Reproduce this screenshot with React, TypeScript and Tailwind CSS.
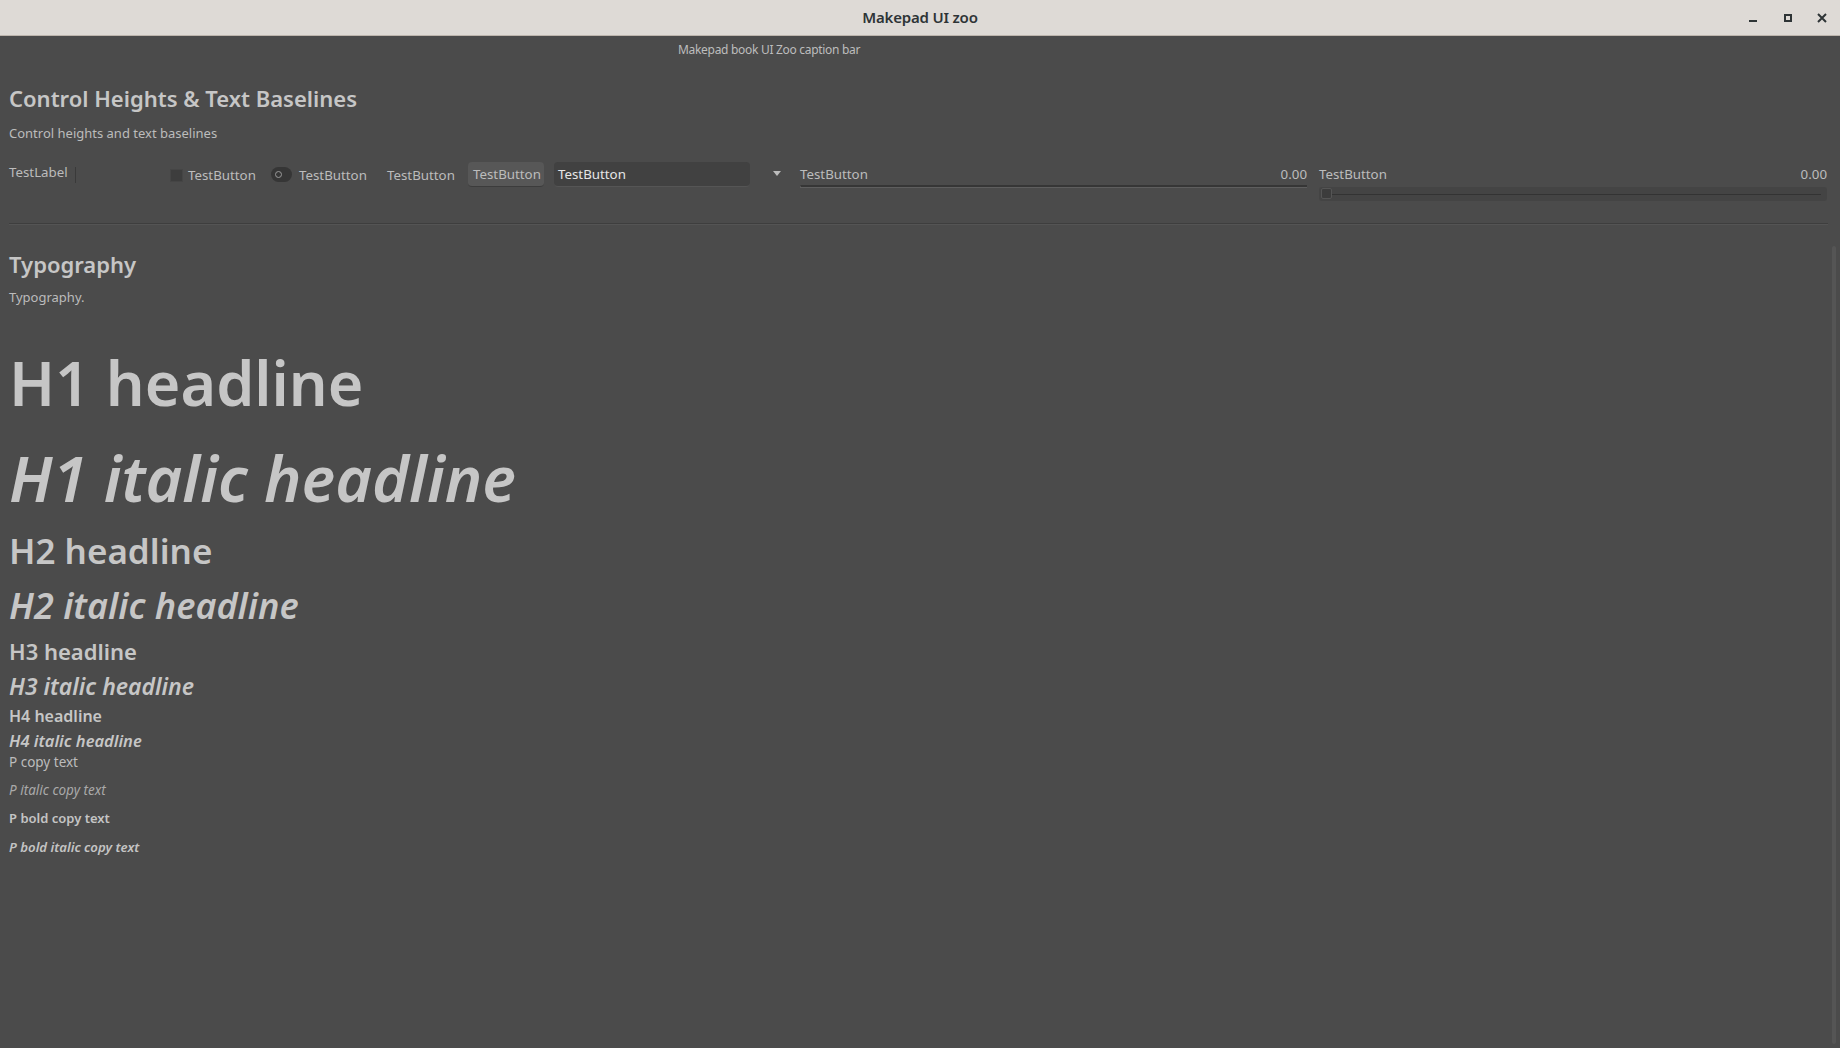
import React from 'react';

const font = "font-['Noto_Sans',sans-serif]";

function TitleBar() {
  return (
    <div className="h-[36px] shrink-0 bg-[#dedad6] border-b border-[#bdb5ad] flex items-center relative">
      <div className="flex-1 text-center text-[15px] font-semibold text-[#2e3436] font-['Noto_Sans',sans-serif] tracking-[-0.2px]">
        Makepad UI zoo
      </div>
      <div className="absolute right-[12px] top-0 h-full flex items-center gap-[22px] text-[#2e3436]">
        <svg width="12" height="12" viewBox="0 0 12 12">
          <rect x="1" y="8" width="8" height="2" fill="currentColor" />
        </svg>
        <svg width="12" height="12" viewBox="0 0 12 12">
          <rect x="3" y="3" width="6" height="6" fill="none" stroke="currentColor" strokeWidth="2" />
        </svg>
        <svg width="12" height="12" viewBox="0 0 12 12">
          <path d="M2 2 L10 10 M10 2 L2 10" stroke="currentColor" strokeWidth="2" />
        </svg>
      </div>
    </div>
  );
}

function Controls() {
  return (
    <div className="flex items-start h-[41px] text-[13.3px] leading-[18px] text-[#bcbcbc]">
      <div className="w-[66px] mt-[3px]">TestLabel</div>
      <div className="w-px h-[16px] bg-[#3a3a3a] mt-[7px]" />
      <div className="ml-[94px] mt-[9px] w-[13px] h-[13px] bg-[#3d3d3d] border border-[#454545]" />
      <div className="ml-[5px] w-[67px] mt-[6px]">TestButton</div>
      <div className="ml-[16px] mt-[7px] w-[21px] h-[15px] rounded-full bg-[#363636] flex items-center pl-[4px]">
        <div className="w-[7px] h-[7px] rounded-full border-[1.5px] border-[#9a9a9a]" />
      </div>
      <div className="ml-[7px] w-[67px] mt-[6px]">TestButton</div>
      <div className="ml-[21px] w-[67px] mt-[6px]">TestButton</div>
      <div className="ml-[14px] mt-[2px] w-[76px] h-[25px] rounded-[4px] bg-[#575757] border-b border-[#3c3c3c] flex items-center pl-[5px]">
        TestButton
      </div>
      <div className="ml-[10px] mt-[2px] w-[196px] h-[25px] rounded-[4px] bg-[#414141] border-b border-[#555] flex items-center pl-[4px] text-[#e6e6e6]">
        TestButton
      </div>
      <div className="ml-[23px] mt-[11px] w-[8px] flex justify-center">
        <svg width="8" height="6" viewBox="0 0 8 6">
          <path d="M0 0 H8 L4 5 Z" fill="#bcbcbc" />
        </svg>
      </div>
      <div className="ml-[19px] mt-[5px] w-[507px] flex flex-col">
        <div className="flex justify-between">
          <span>TestButton</span>
          <span>0.00</span>
        </div>
        <div className="mt-[2px] h-[3px] border-t-2 border-[#363636] border-b border-b-[#5e5e5e] border-l border-l-[#5e5e5e]" />
      </div>
      <div className="ml-[12px] mt-[5px] w-[508px] flex flex-col">
        <div className="flex justify-between">
          <span>TestButton</span>
          <span>0.00</span>
        </div>
        <div className="mt-[4px] h-[14px] rounded-[3px] bg-[#444444] flex items-center relative">
          <div className="mx-[6px] flex-1 h-px bg-[#333333]" />
          <div className="absolute left-[2px] top-[1px] w-[11px] h-[11px] rounded-[2px] bg-[#3c3c3c] border border-[#555]" />
        </div>
      </div>
    </div>
  );
}

export default function App() {
  const head = 'text-[#c6c6c6] font-semibold';
  const body = 'text-[13px] leading-[18px]';
  return (
    <div className={`w-[1840px] h-[1048px] bg-[#4b4b4b] flex flex-col overflow-hidden relative ${font}`}>
      <TitleBar />
      <div className="h-[28px] pl-[678px] flex items-center text-[12px] text-[#bdbdbd] tracking-[-0.3px]">
        Makepad book UI Zoo caption bar
      </div>
      <div className="pl-[9px] pr-[12px] flex flex-col">
        <div className={`${head} text-[22px] leading-[30px] mt-[19px]`}>Control Heights &amp; Text Baselines</div>
        <div className={`${body} text-[#bcbcbc] mt-[11px]`}>Control heights and text baselines</div>
        <div className="mt-[18px]">
          <Controls />
        </div>
        <div className="mt-[22px] h-[2px] border-t border-[#3e3e3e] border-b border-b-[#545454]" />
        <div className={`${head} text-[22px] leading-[30px] mt-[24px]`}>Typography</div>
        <div className={`${body} text-[#bcbcbc] mt-[9px]`}>Typography.</div>
        <div className={`${head} text-[61px] leading-[72px] mt-[41px]`}>H1 headline</div>
        <div className={`${head} text-[63px] leading-[72px] italic font-bold mt-[23px]`}>H1 italic headline</div>
        <div className={`${head} text-[35px] leading-[44px] mt-[15px]`}>H2 headline</div>
        <div className={`${head} text-[36px] leading-[44px] italic font-bold mt-[11px]`}>H2 italic headline</div>
        <div className={`${head} text-[22px] leading-[28px] mt-[9px]`}>H3 headline</div>
        <div className={`${head} text-[23px] leading-[28px] italic font-bold mt-[7px]`}>H3 italic headline</div>
        <div className={`${head} text-[16px] leading-[20px] mt-[6px]`}>H4 headline</div>
        <div className={`${head} text-[16.5px] leading-[20px] italic font-bold mt-[5px]`}>H4 italic headline</div>
        <div className="text-[13.5px] leading-[18px] text-[#bcbcbc] mt-[2px]">P copy text</div>
        <div className="text-[13.5px] leading-[18px] text-[#a9a9a9] italic mt-[10px]">P italic copy text</div>
        <div className="text-[13px] leading-[18px] text-[#c4c4c4] font-semibold mt-[10px]">P bold copy text</div>
        <div className="text-[13.2px] leading-[18px] text-[#c4c4c4] font-semibold italic mt-[11px]">P bold italic copy text</div>
      </div>
      <div className="absolute right-[4px] top-[246px] w-[4px] h-[798px] rounded-full bg-[#555555]" />
    </div>
  );
}
